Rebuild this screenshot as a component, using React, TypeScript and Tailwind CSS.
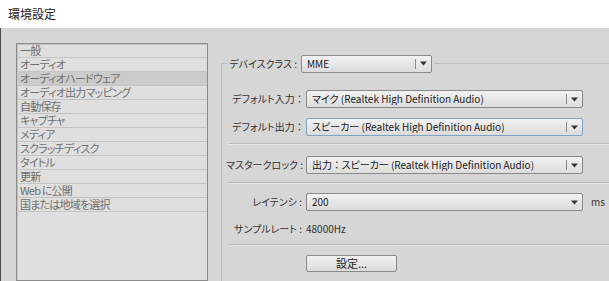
import React from 'react';

const items = [
  '一般',
  'オーディオ',
  'オーディオハードウェア',
  'オーディオ出力マッピング',
  '自動保存',
  'キャプチャ',
  'メディア',
  'スクラッチディスク',
  'タイトル',
  '更新',
  'Web に公開',
  '国または地域を選択',
];

const Arrow = () => (
  <svg width="7" height="5" viewBox="0 0 7 5" className="block">
    <path d="M0 0.5h7L3.5 4.5z" fill="#333" />
  </svg>
);

const Select: React.FC<{ value: string; width: string; focus?: boolean; divider?: boolean }> = ({
  value,
  width,
  focus,
  divider = true,
}) => (
  <div
    className={`${width} h-[18px] flex items-center rounded-[2px] border bg-gradient-to-b from-[#f2f2f2] to-[#dcdcdc] ${
      focus ? 'border-[#7fa5c6]' : 'border-[#8a8a8a]'
    }`}
  >
    <span className="flex-1 pl-[5px] text-[10px] leading-[12px] text-[#222] whitespace-nowrap overflow-hidden [font-feature-settings:'palt']">
      {value}
    </span>
    <div className="w-[16px] h-full flex items-center">
      <div className={`w-px h-[10px] ${divider ? 'bg-[#8a8a8a]' : 'bg-transparent'}`} />
      <div className="flex-1 flex justify-center">
        <Arrow />
      </div>
    </div>
  </div>
);

const Label: React.FC<{ text: string; w?: string }> = ({ text, w = 'w-[80px]' }) => (
  <div className={`${w} shrink-0 text-right pr-[4px] text-[10px] leading-[12px] text-[#333] whitespace-nowrap [font-feature-settings:'palt']`}>
    {text}
  </div>
);

const Sep = () => (
  <div className="ml-[7px]">
    <div className="h-px bg-[#b9b9b9]" />
    <div className="h-px bg-[#e6e6e6]" />
  </div>
);

export default function App() {
  return (
    <div className="w-[609px] h-[281px] overflow-hidden flex flex-col bg-[#d6d6d6] font-['Noto_Sans_CJK_JP',sans-serif]">
      <div className="h-[28px] shrink-0 bg-white flex items-center pl-[8px] text-[12px] text-[#1a1a1a]">環境設定</div>
      <div className="flex-1 flex border-l border-[#4a4a4a] min-h-0">
        <div className="ml-[15px] mt-[15px] w-[192px] shrink-0 border border-[#8c8c8c] bg-[#dfdfdf] shadow-[inset_1px_1px_0_#c2c2c2]">
          {items.map((it, i) => (
            <div
              key={it}
              className={`h-[14px] flex items-center border-b border-[#c4c4c4] pl-[3px] text-[11px] leading-[13px] tracking-[-0.8px] text-[#707070] whitespace-nowrap [font-feature-settings:'palt'] ${
                i === 2 ? 'bg-[#cbcbcb]' : ''
              }`}
            >
              {it}
            </div>
          ))}
        </div>
        <fieldset className="ml-[13px] mt-[26px] flex-1 border-l border-t border-[#bdbdbd] min-w-0">
          <legend className="ml-[5px] flex items-center h-[19px]">
            <Label text="デバイスクラス :" w="w-[74px]" />
            <Select value="MME" width="w-[131px]" />
            <div className="w-[2px]" />
          </legend>
          <div className="flex flex-col">
            <div className="mt-[17px] flex items-center ml-[4px]">
              <Label text="デフォルト入力 ：" />
              <Select value="マイク (Realtek High Definition Audio)" width="w-[277px]" />
            </div>
            <div className="mt-[10px] flex items-center ml-[4px]">
              <Label text="デフォルト出力 ：" />
              <Select value="スピーカー (Realtek High Definition Audio)" width="w-[277px]" focus />
            </div>
            <div className="mt-[7px]">
              <Sep />
            </div>
            <div className="mt-[11px] flex items-center ml-[4px]">
              <Label text="マスタークロック :" />
              <Select value="出力 ： スピーカー (Realtek High Definition Audio)" width="w-[277px]" />
            </div>
            <div className="mt-[8px]">
              <Sep />
            </div>
            <div className="mt-[9px] flex items-center ml-[4px]">
              <Label text="レイテンシ :" />
              <Select value="200" width="w-[277px]" divider={false} />
              <span className="ml-[8px] text-[10px] leading-[12px] text-[#333]">ms</span>
            </div>
            <div className="mt-[9px] h-[18px] flex items-center ml-[4px]">
              <Label text="サンプルレート :" />
              <span className="text-[10px] leading-[12px] text-[#333]">48000Hz</span>
            </div>
            <div className="mt-[6px]">
              <Sep />
            </div>
            <div className="mt-[9px] ml-[84px] w-[91px] h-[17px] flex items-center justify-center rounded-[2px] border border-[#8a8a8a] bg-gradient-to-b from-[#f2f2f2] to-[#dadada] text-[11px] leading-[13px] text-[#222]">
              設定...
            </div>
          </div>
        </fieldset>
      </div>
    </div>
  );
}
